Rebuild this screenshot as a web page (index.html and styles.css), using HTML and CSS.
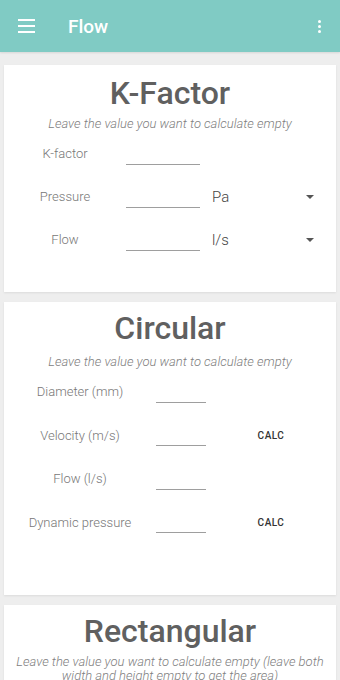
FILE: index.html
```html
<!DOCTYPE html>
<html lang="en">
<head>
  <meta charset="UTF-8"/><meta name="viewport" content="width=device-width, initial-scale=1.0"/>
  <title>Flow</title>
  <link rel="stylesheet" href="styles.css">
</head>
<body>
  <header class="appbar">
    <span class="menu"><i></i><i></i><i></i></span>
    <span class="title">Flow</span>
    <span class="more"><i></i><i></i><i></i></span>
  </header>
  <main>
    <section class="card kfactor">
      <h1>K-Factor</h1>
      <p class="hint">Leave the value you want to calculate empty</p>
      <div class="row">
        <label>K-factor</label><span class="field"></span><span></span>
      </div>
      <div class="row">
        <label>Pressure</label><span class="field"></span>
        <span class="unit">Pa<b class="arrow"></b></span>
      </div>
      <div class="row">
        <label>Flow</label><span class="field"></span>
        <span class="unit">l/s<b class="arrow"></b></span>
      </div>
    </section>
    <section class="card circular">
      <h1>Circular</h1>
      <p class="hint">Leave the value you want to calculate empty</p>
      <div class="row">
        <label>Diameter (mm)</label><span class="field"></span><span></span>
      </div>
      <div class="row">
        <label>Velocity (m/s)</label><span class="field"></span><span class="calc">CALC</span>
      </div>
      <div class="row">
        <label>Flow (l/s)</label><span class="field"></span><span></span>
      </div>
      <div class="row">
        <label>Dynamic pressure</label><span class="field"></span><span class="calc">CALC</span>
      </div>
    </section>
    <section class="card rect">
      <h1>Rectangular</h1>
      <p class="hint">Leave the value you want to calculate empty (leave both width and height empty to get the area)</p>
    </section>
  </main>
</body>
</html>
```
FILE: styles.css
```css
body{margin:0;font-family:Roboto,"Noto Sans",sans-serif;background:#eeeeee;overflow:hidden;}
.appbar{height:52px;background:#80cbc4;display:flex;align-items:center;color:#fff;box-shadow:0 1px 2px rgba(0,0,0,0.1);}
.menu{display:flex;flex-direction:column;gap:4px;width:17px;margin-left:18px;}
.menu i{display:block;height:2px;background:#fff;}
.title{margin-left:33px;font-size:19px;font-weight:500;}
.more{margin-left:auto;margin-right:19px;display:flex;flex-direction:column;gap:2px;}
.more i{display:block;width:3px;height:3px;border-radius:50%;background:#fff;}
main{padding:13px 4px 0;display:flex;flex-direction:column;gap:10px;}
.card{background:#fff;box-shadow:0 1px 2px rgba(0,0,0,0.08);padding:10px 0 31px;}
.card h1{margin:0;text-align:center;font-size:32px;line-height:36px;font-weight:500;color:#606060;}
.hint{margin:6px 8px 1px;text-align:center;font-size:13px;line-height:14px;font-style:italic;font-weight:300;color:#808080;}
.row{display:grid;height:43px;align-items:center;}
.kfactor .row{grid-template-columns:122px 74px 1fr;}
.circular{padding-top:8px;padding-bottom:51px;}
.circular .row{grid-template-columns:152px 50px 1fr;height:43.5px;}
.circular .hint{margin-top:9px;margin-bottom:1px;}
label{text-align:center;font-size:13px;font-weight:300;color:#777;}
.field{height:21px;border-bottom:1px solid #9e9e9e;}
.unit{display:flex;align-items:center;justify-content:space-between;padding:0 22px 0 12px;font-size:15px;font-weight:300;color:#444;}
.arrow{width:0;height:0;border-left:4px solid transparent;border-right:4px solid transparent;border-top:4px solid #555;}
.calc{text-align:center;font-size:10px;font-weight:500;color:#333;letter-spacing:.5px;}
.rect{padding-top:8px;}
```
